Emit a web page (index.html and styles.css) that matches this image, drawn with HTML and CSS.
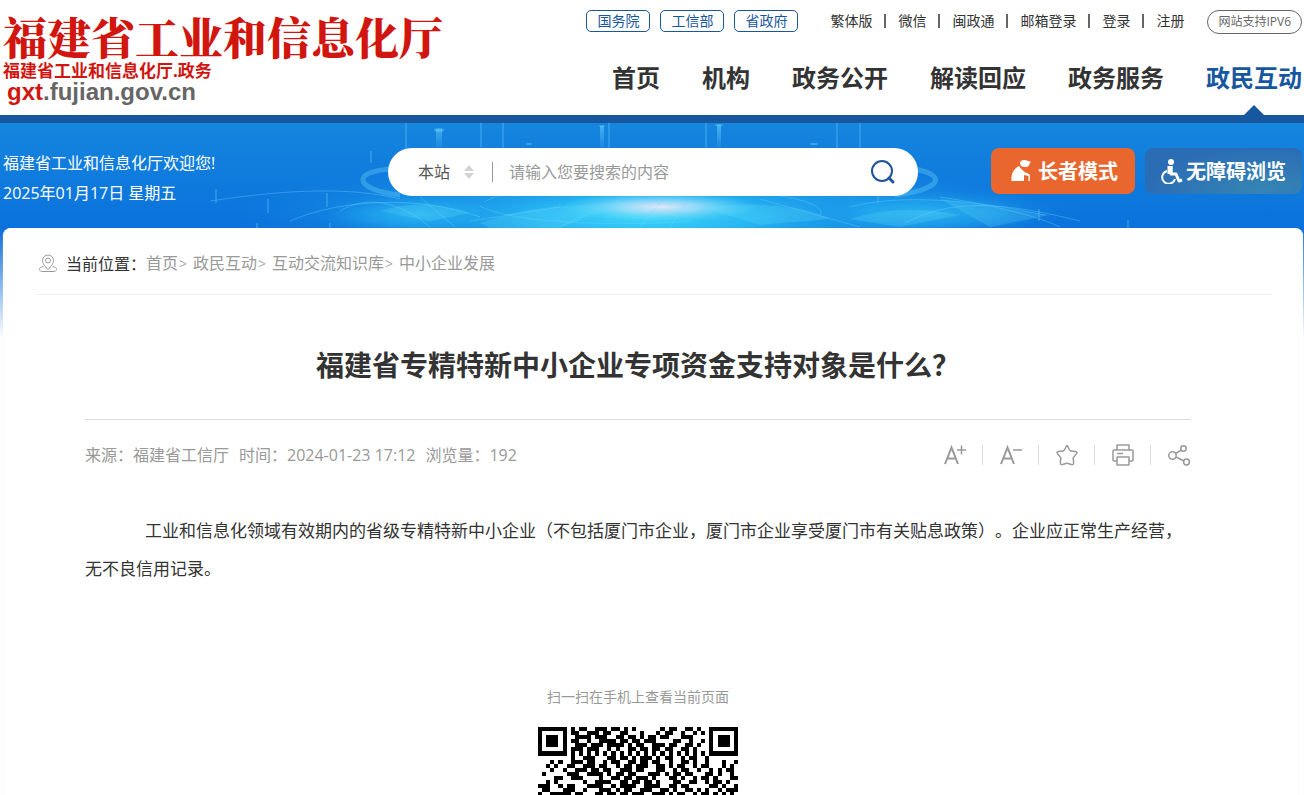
FILE: index.html
```html
<!DOCTYPE html>
<html lang="zh-CN">
<head>
  <meta charset="UTF-8">
  <meta name="viewport" content="width=device-width, initial-scale=1.0">
  <title>福建省专精特新中小企业专项资金支持对象是什么？</title>
  <link rel="stylesheet" href="styles.css">
</head>
<body>
  <header class="header">
    <a class="logo" href="#">
      <span class="logo-name">福建省工业和信息化厅</span>
      <span class="logo-sub">福建省工业和信息化厅.政务</span>
      <span class="logo-domain"><b>gxt</b>.fujian.gov.cn</span>
    </a>
    <div class="header-right">
      <div class="topbar">
        <div class="tags">
          <a href="#">国务院</a>
          <a href="#">工信部</a>
          <a href="#">省政府</a>
        </div>
        <ul class="toplinks">
          <li><a href="#">繁体版</a></li>
          <li><a href="#">微信</a></li>
          <li><a href="#">闽政通</a></li>
          <li><a href="#">邮箱登录</a></li>
          <li><a href="#">登录</a></li>
          <li><a href="#">注册</a></li>
        </ul>
        <span class="ipv6">网站支持IPV6</span>
      </div>
      <nav class="nav">
        <a href="#">首页</a>
        <a href="#">机构</a>
        <a href="#">政务公开</a>
        <a href="#">解读回应</a>
        <a href="#">政务服务</a>
        <a class="active" href="#">政民互动</a>
      </nav>
    </div>
  </header>

  <section class="banner">
    <svg class="banner-bg" viewBox="0 0 1304 105" preserveAspectRatio="xMidYMid slice" aria-hidden="true">
      <defs>
        <linearGradient id="sky" x1="0" y1="0" x2="0" y2="1">
          <stop offset="0" stop-color="#1585de"/>
          <stop offset="1" stop-color="#0a72dc"/>
        </linearGradient>
        <radialGradient id="glow">
          <stop offset="0" stop-color="#3fd8fa"/>
          <stop offset="0.5" stop-color="#27b9f4" stop-opacity="0.8"/>
          <stop offset="1" stop-color="#1488e4" stop-opacity="0"/>
        </radialGradient>
        <radialGradient id="core">
          <stop offset="0" stop-color="#e4e8fa"/>
          <stop offset="0.4" stop-color="#b5e2fa" stop-opacity="0.7"/>
          <stop offset="1" stop-color="#5adcfa" stop-opacity="0"/>
        </radialGradient>
        <linearGradient id="beam" x1="0" y1="0" x2="0" y2="1">
          <stop offset="0" stop-color="#5cc6f7" stop-opacity="0.7"/>
          <stop offset="1" stop-color="#5cc6f7" stop-opacity="0"/>
        </linearGradient>
      </defs>
      <rect width="1304" height="105" fill="url(#sky)"/>
      <ellipse cx="655" cy="90" rx="430" ry="56" fill="url(#glow)" opacity="0.65"/>
      <ellipse cx="420" cy="92" rx="110" ry="22" fill="url(#glow)" opacity="0.5"/>
      <ellipse cx="930" cy="90" rx="130" ry="24" fill="url(#glow)" opacity="0.5"/>
      <ellipse cx="645" cy="94" rx="230" ry="40" fill="url(#glow)"/>
      <ellipse cx="660" cy="84" rx="100" ry="15" fill="url(#core)"/>
      <g fill="#6fe4fc" fill-opacity="0.2">
        <path d="M480 100Q540 78 620 82L560 105H490ZM700 84Q790 76 830 96L760 102ZM380 88Q420 74 470 90L430 98ZM850 96Q900 80 960 92L900 104ZM940 76L1050 92L990 104Z"/>
      </g>
      <g fill="none" stroke="#6fd3fa" stroke-opacity="0.35">
        <path d="M392 46C352 48 352 66 400 72" stroke-width="5"/>
        <path d="M915 46C946 52 944 66 895 72" stroke-width="5"/>
        <path d="M485 79C500 68 540 64 580 66M480 83C510 100 620 104 690 98M820 92C830 78 760 66 700 68"/>
        <path d="M210 78C290 66 350 64 400 76M290 98C340 76 420 72 480 94M340 88C366 72 400 78 430 104"/>
        <path d="M850 84C900 70 980 78 1045 92M940 74C980 80 1030 90 1060 104M905 100C950 76 1000 78 1080 98"/>
        <path d="M420 74L455 104M560 104L620 76M640 104L660 80M670 104L690 74M760 76L860 104M470 98L560 84"/>
      </g>
      <g stroke="#4fb6f2" stroke-opacity="0.4" stroke-width="2">
        <path d="M406 0V26M481 0V24M503 0V26M609 0V26M706 0V26M837 0V26M860 0V30M216 66V80M268 76V90M327 70V84M371 28V40M1039 86V98M1128 97V105M257 100V105M330 100V105M560 80V90M878 60V80"/>
      </g>
      <path d="M436 6H442V28H436ZM600 3H604V28H600ZM717 2H721V28H717Z" fill="url(#beam)"/>
      <g fill="#6fd0f8" fill-opacity="0.45">
        <ellipse cx="439" cy="7" rx="5" ry="2"/>
        <ellipse cx="602" cy="3" rx="3" ry="1"/>
        <ellipse cx="719" cy="2" rx="4" ry="1"/>
        <ellipse cx="529" cy="21" rx="3" ry="1"/>
        <ellipse cx="814" cy="21" rx="4" ry="1"/>
      </g>
    </svg>
    <div class="banner-inner">
      <div class="welcome">
        <p>福建省工业和信息化厅欢迎您!</p>
        <p>2025年01月17日 星期五</p>
      </div>
      <form class="search">
        <div class="scope">
          <select aria-label="搜索范围">
            <option>本站</option>
          </select>
          <svg width="10" height="16" viewBox="0 0 10 16" aria-hidden="true"><path d="M0 7L5 1L10 7ZM0 9H10L5 15Z" fill="#d2d2d2"/></svg>
        </div>
        <input type="text" aria-label="搜索" placeholder="请输入您要搜索的内容">
        <button type="button" aria-label="搜索">
          <svg width="26" height="26" viewBox="0 0 26 26" fill="none" stroke="#1d549c" stroke-width="2"><circle cx="12" cy="12" r="10"/><path d="M19 19L23 23" stroke-width="3" stroke-linecap="round"/></svg>
        </button>
      </form>
      <div class="modes">
        <button class="mode elder" type="button">
          <svg width="20" height="24" viewBox="0 0 20 24" fill="#fff" aria-hidden="true"><path d="M9 4C9 1.500 12 0.500 14 1L19 2.500C20 3 19.500 4.500 18.500 4.500C18.500 7 16.500 8.500 14 8C11 8 9 6.500 9 4Z"/><path d="M8 7C10 10 12 11 13.500 13L18 15C19 15.500 19 17 19 22H17.500V17L13 16V22H0.500C0 16 2 10 8 7Z"/></svg>
          <span>长者模式</span>
        </button>
        <button class="mode access" type="button">
          <svg width="22" height="26" viewBox="0 0 22 26" fill="none" stroke="#fff" aria-hidden="true"><circle cx="10" cy="4" r="3" fill="#fff" stroke="none"/><path d="M10 8V16H15L18 23L21 22" stroke-width="3" stroke-linejoin="round"/><path d="M9 8V16" stroke-width="5"/><path d="M6 13A6.500 6.500 0 1 0 14 21" stroke-width="2"/></svg>
          <span>无障碍浏览</span>
        </button>
      </div>
    </div>
  </section>

  <main class="main">
    <div class="card">
      <nav class="crumbs" aria-label="当前位置">
        <svg width="18" height="19" viewBox="0 0 18 19" fill="none" stroke="#999" aria-hidden="true"><path d="M9 15.500C5 11.500 3.500 9 3.500 6.500A5.500 5.500 0 0 1 14.500 6.500C14.500 9 13 11.500 9 15.500Z"/><circle cx="9" cy="6.500" r="2.500"/><path d="M4.500 12.500C-1.500 13.500-0.500 17.500 4 17.500H14C18.500 17.500 19.500 13.500 13.500 12.500"/></svg>
        <span class="crumbs-label">当前位置：</span>
        <ol>
          <li><a href="#">首页</a></li>
          <li><a href="#">政民互动</a></li>
          <li><a href="#">互动交流知识库</a></li>
          <li><a href="#">中小企业发展</a></li>
        </ol>
      </nav>

      <article class="article">
        <h1>福建省专精特新中小企业专项资金支持对象是什么？</h1>
        <div class="meta">
          <div class="meta-info">
            <span>来源：福建省工信厅</span>
            <span>时间：2024-01-23 17:12</span>
            <span>浏览量：192</span>
          </div>
          <div class="tools">
            <button type="button" aria-label="放大字号">
              <svg width="24" height="24" viewBox="0 0 24 24" fill="none" stroke="#999" stroke-width="2"><path d="M2 21L8.500 4.500L15 21M4.500 15.500H12.500"/><path d="M14 7H23M18.500 2.500V11.500" stroke-width="1.500"/></svg>
            </button>
            <button type="button" aria-label="缩小字号">
              <svg width="24" height="24" viewBox="0 0 24 24" fill="none" stroke="#999" stroke-width="2"><path d="M2 21L8.500 4.500L15 21M4.500 15.500H12.500"/><path d="M14 7H23" stroke-width="1.500"/></svg>
            </button>
            <button type="button" aria-label="收藏">
              <svg width="24" height="24" viewBox="0 0 24 24" fill="none" stroke="#999" stroke-width="1.500" stroke-linejoin="round"><path d="M12 2.500C13 3 14 7 15.500 7.800C17 8.500 21.500 8 22 9.500C22.300 11 18.500 13.500 18.200 15C18 16.500 19.500 20.500 18 21.500C16.500 22.200 14 20.200 12 20.200S7.500 22.200 6 21.500C4.500 20.500 6 16.500 5.800 15C5.500 13.500 1.700 11 2 9.500C2.500 8 7 8.500 8.500 7.800C10 7 11 3 12 2.500Z"/></svg>
            </button>
            <button type="button" aria-label="打印">
              <svg width="24" height="24" viewBox="0 0 24 24" fill="none" stroke="#999" stroke-width="1.500" stroke-linejoin="round"><path d="M6 7V2H18V7M6 18H3Q2 18 2 17V8Q2 7 3 7H21Q22 7 22 8V17Q22 18 21 18H18"/><path d="M6 14H18V22H6ZM6 10.500H12"/></svg>
            </button>
            <button type="button" aria-label="分享">
              <svg width="24" height="24" viewBox="0 0 24 24" fill="none" stroke="#999" stroke-width="1.500"><circle cx="5.500" cy="12.500" r="3.700"/><circle cx="16.500" cy="5.500" r="2.700"/><circle cx="19.500" cy="19" r="2.900"/><path d="M8.500 10.500L14.500 7M9 14L17 18"/></svg>
            </button>
          </div>
        </div>
        <p class="content">工业和信息化领域有效期内的省级专精特新中小企业（不包括厦门市企业，厦门市企业享受厦门市有关贴息政策）。企业应正常生产经营，无不良信用记录。</p>
        <div class="qr">
          <p>扫一扫在手机上查看当前页面</p>
          <svg id="qr" viewBox="0 0 49 17" shape-rendering="crispEdges" role="img" aria-label="二维码"></svg>
        </div>
      </article>
    </div>
  </main>

  <script>
    // one string per module row
    const rows = [
      "1111111010110011101101010000001011001101001101111",
      "1000001011001110110011000100010110010010110100001",
      "1011101001111011100110110101101100011100010101101",
      "1011101011001001111011011011100001100100110101101",
      "1011101001110111011110101100111011001101001001101",
      "1000001011101110010100110110110110011010010100001",
      "1111111010101010101010101010101010101010101011111",
      "0000000010011100011011010111010110010110010000000",
      "0001010011101100101100110110110010011010010001001",
      "0010100110011101100101101110011010110010110001010",
      "0001001001110110110011101100011001011001001010110",
      "0100000111001111010110110001110101101100011010010",
      "0000110011100001001101101110100011010010110100011",
      "0010100000010011110011011011010001100110010110100",
      "1110010110001111001011110011110011011000001101001",
      "0110001110010001110101100111001101001101010010111",
      "1001111101100011011011011100111010110010110101010"
    ];
    const finder = ["1111111", "1000001", "1011101", "1011101", "1011101", "1000001", "1111111"];
    let d = "";
    rows.forEach((row, y) => {
      if (y < 7) row = row.slice(0, 41) + "0" + finder[y];
      [...row].forEach((cell, x) => {
        if (cell === "1") d += `M${x} ${y}h1v1h-1z`;
      });
    });
    document.getElementById("qr").innerHTML = `<path d="${d}"/>`;
  </script>
</body>
</html>
```
FILE: styles.css
```css
* {
  margin: 0;
  padding: 0;
  box-sizing: border-box;
}

body {
  background: #fff;
  color: #333;
  font-family: "Open Sans", "Noto Sans CJK SC", sans-serif;
  font-size: 16px;
  line-height: 24px;
  text-spacing-trim: space-all;
}

a {
  color: inherit;
  text-decoration: none;
}

ul,
ol {
  list-style: none;
}

button,
select,
input {
  font: inherit;
  color: inherit;
  background: none;
  border: 0;
  outline: 0;
}

svg {
  display: block;
}

/* header */
.header {
  display: flex;
  justify-content: space-between;
  height: 115px;
  padding: 10px 2px 0 3px;
}

.logo {
  display: flex;
  flex-direction: column;
  color: #d0160f;
  white-space: nowrap;
}

.logo-name {
  font-family: "Noto Serif CJK SC", "Noto Sans CJK SC", serif;
  font-size: 44px;
  font-weight: 900;
  line-height: 52px;
}

.logo-sub {
  font-size: 17px;
  font-weight: 700;
  line-height: 17px;
}

.logo-domain {
  padding-left: 4px;
  color: #666;
  font-family: "Liberation Sans", Arial, sans-serif;
  font-size: 24px;
  font-weight: 700;
  line-height: 25px;
}

.logo-domain b {
  color: #d0160f;
}

.header-right {
  display: flex;
  flex-direction: column;
  justify-content: space-between;
  align-items: flex-end;
  white-space: nowrap;
}

.topbar {
  display: flex;
  align-items: flex-start;
  font-size: 14px;
  line-height: 22px;
}

.tags {
  display: flex;
  gap: 10px;
  margin-right: 32px;
}

.tags a {
  width: 64px;
  border: 1px solid #17579f;
  border-radius: 5px;
  color: #17579f;
  line-height: 20px;
  text-align: center;
}

.toplinks {
  display: flex;
  margin-right: 23px;
}

.toplinks li {
  display: flex;
  align-items: center;
}

.toplinks li + li::before {
  content: "";
  width: 2px;
  height: 14px;
  margin: 0 12px;
  background: #666;
}

.ipv6 {
  padding: 0 10px;
  border: 1px solid #666;
  border-radius: 12px;
  color: #666;
  font-size: 12px;
}

.nav {
  display: flex;
  gap: 42px;
  font-size: 24px;
  font-weight: 700;
  line-height: 36px;
}

.nav a {
  height: 55px;
}

.nav .active {
  display: flex;
  flex-direction: column;
  justify-content: space-between;
  align-items: center;
  color: #17579f;
}

.nav .active::after {
  content: "";
  border: 10px solid transparent;
  border-top: 0;
  border-bottom-color: #17579f;
}

/* banner */
.banner {
  position: relative;
  border-top: 8px solid #17579f;
}

.banner-bg {
  position: absolute;
  inset: 0;
  width: 100%;
  height: 100%;
}

.banner-inner {
  position: relative;
  display: grid;
  grid-template-columns: 385px minmax(0, 530px) 1fr;
  align-items: start;
  height: 105px;
  padding: 25px 2px 0 3px;
}

.welcome {
  color: #fff;
  line-height: 30px;
}

.search {
  display: flex;
  align-items: center;
  height: 48px;
  padding: 0 22px 0 30px;
  border-radius: 24px;
  background: #fff;
}

.scope {
  display: flex;
  align-items: center;
  gap: 14px;
  padding-right: 18px;
  border-right: 1px solid #999;
  height: 20px;
}

.scope select {
  appearance: none;
  width: 32px;
  color: #555;
}

.search input {
  flex: 1;
  min-width: 0;
  padding-left: 16px;
}

.search input::placeholder {
  color: #999;
}

.modes {
  display: flex;
  justify-content: flex-end;
  gap: 10px;
}

.mode {
  display: flex;
  align-items: center;
  height: 46px;
  border-radius: 8px;
  color: #fff;
  font-size: 20px;
  font-weight: 700;
  white-space: nowrap;
}

.mode span {
  padding-top: 2px;
}

.elder {
  gap: 7px;
  padding: 0 17px 0 20px;
  background: #e9672f;
}

.access {
  gap: 3px;
  padding: 0 16px;
  background: radial-gradient(ellipse at 75% 90%, #3585b4, #2b6db5 70%);
}

/* page card */
.main {
  padding: 0 1px 0 3px;
  background: linear-gradient(#0a6cdb, #fff 110px);
}

.card {
  padding: 0 31px 0 32px;
  border-radius: 8px 8px 0 0;
  background: #fff;
  box-shadow: 0 0 1px #ddd;
}

.crumbs {
  display: flex;
  align-items: center;
  height: 67px;
  padding: 5px 5px 0 4px;
  border-bottom: 1px solid #f0f0f0;
}

.crumbs-label {
  margin-left: 9px;
}

.crumbs ol {
  display: flex;
  color: #999;
}

.crumbs li + li::before {
  content: ">";
  margin: 0 6px 0 1px;
  font-size: 14px;
  color: #aaa;
}

.article {
  padding: 0 81px 0 50px;
}

.article h1 {
  padding: 49px 0 33px;
  border-bottom: 1px solid #ddd;
  font-size: 28px;
  line-height: 42px;
  text-align: center;
}

.meta {
  display: flex;
  justify-content: space-between;
  align-items: center;
  height: 70px;
  color: #999;
}

.meta-info {
  display: flex;
  gap: 10px;
}

.tools {
  display: flex;
  align-items: center;
}

.tools button {
  display: flex;
  align-items: center;
}

.tools button + button::before {
  content: "";
  width: 1px;
  height: 20px;
  margin: 0 16px 0 15px;
  background: #ddd;
}

.content {
  padding-top: 22px;
  font-size: 17px;
  line-height: 38px;
  text-indent: 60px;
}

.qr {
  display: flex;
  flex-direction: column;
  align-items: center;
  gap: 18px;
  padding-top: 97px;
  color: #999;
  font-size: 14px;
}

.qr svg {
  width: 200px;
  fill: #000;
}
```
